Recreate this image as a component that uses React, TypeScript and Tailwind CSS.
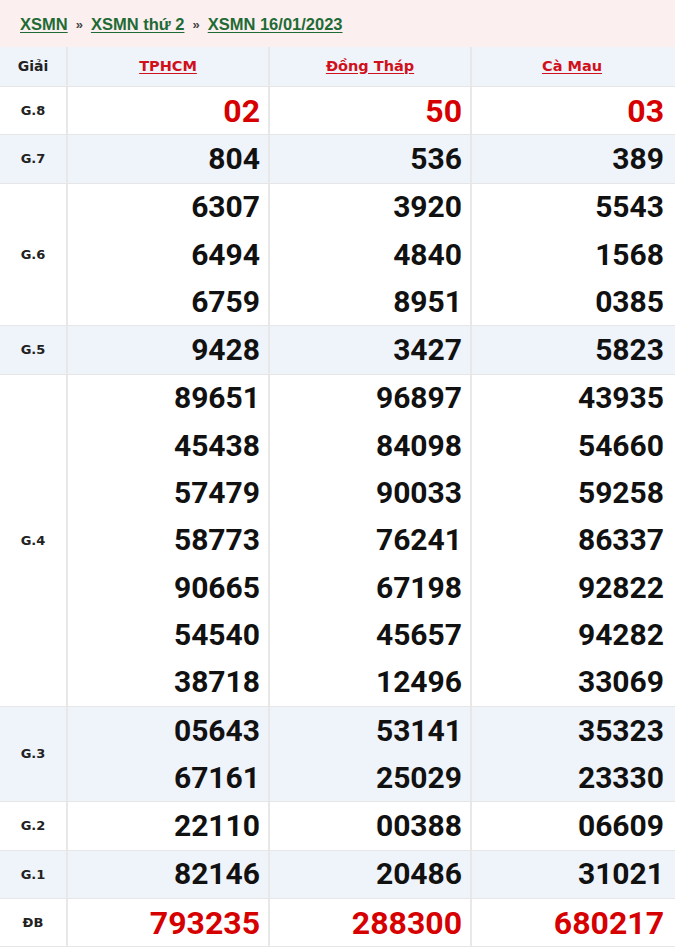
import React from "react";

type Row = { label: string; lines: string[][]; red?: boolean; alt?: boolean };

const rows: Row[] = [
  { label: "G.8", lines: [["02", "50", "03"]], red: true },
  { label: "G.7", lines: [["804", "536", "389"]], alt: true },
  {
    label: "G.6",
    lines: [
      ["6307", "3920", "5543"],
      ["6494", "4840", "1568"],
      ["6759", "8951", "0385"],
    ],
  },
  { label: "G.5", lines: [["9428", "3427", "5823"]], alt: true },
  {
    label: "G.4",
    lines: [
      ["89651", "96897", "43935"],
      ["45438", "84098", "54660"],
      ["57479", "90033", "59258"],
      ["58773", "76241", "86337"],
      ["90665", "67198", "92822"],
      ["54540", "45657", "94282"],
      ["38718", "12496", "33069"],
    ],
  },
  {
    label: "G.3",
    lines: [
      ["05643", "53141", "35323"],
      ["67161", "25029", "23330"],
    ],
    alt: true,
  },
  { label: "G.2", lines: [["22110", "00388", "06609"]] },
  { label: "G.1", lines: [["82146", "20486", "31021"]], alt: true },
  { label: "ĐB", lines: [["793235", "288300", "680217"]], red: true },
];

const labelFont = { fontFamily: "'DejaVu Sans', Verdana, sans-serif" };

export default function App() {
  return (
    <div
      className="w-[675px] h-[947px] overflow-hidden bg-white"
      style={{ fontFamily: "Roboto, 'Liberation Sans', Arial, sans-serif" }}
    >
      <div
        className="h-[47px] bg-[#fcefef] flex items-center pl-[20px] gap-[8px] text-[16.5px] font-bold pt-[2px]"
        style={{ fontFamily: "'Liberation Sans', Arial, sans-serif" }}
      >
        <span className="text-[#1e6b35] underline underline-offset-2">XSMN</span>
        <span className="text-[#444] text-[13px]">»</span>
        <span className="text-[#1e6b35] underline underline-offset-2">XSMN thứ 2</span>
        <span className="text-[#444] text-[13px]">»</span>
        <span className="text-[#1e6b35] underline underline-offset-2">XSMN 16/01/2023</span>
      </div>
      <div
        className="grid grid-cols-[68px_202px_202px_203px] h-[40px] bg-[#eff3fa] border-b border-[#e6e6e6]"
        style={labelFont}
      >
        <div className="flex items-center justify-center text-[14px] font-bold text-[#222] border-r-2 border-[#e8e8e8]">
          Giải
        </div>
        {["TPHCM", "Đồng Tháp", "Cà Mau"].map((n, i) => (
          <div
            key={n}
            className={`flex items-center justify-center ${i < 2 ? "border-r-2 border-[#e8e8e8]" : "pr-[3px]"}`}
          >
            <span className="text-[14.5px] font-bold text-[#d0101a] underline underline-offset-2">{n}</span>
          </div>
        ))}
      </div>
      {rows.map((r) => (
        <div
          key={r.label}
          className={`grid grid-cols-[68px_202px_202px_203px] border-b border-[#e6e6e6] ${
            r.alt ? "bg-[#eff3fa]" : "bg-white"
          }`}
        >
          <div
            className="flex items-center justify-center text-[13px] font-bold text-[#222] border-r-2 border-[#e8e8e8]"
            style={labelFont}
          >
            {r.label}
          </div>
          {[0, 1, 2].map((c) => (
            <div
              key={c}
              className={`flex flex-col ${c < 2 ? "pr-[8px] border-r-2 border-[#e8e8e8]" : "pr-[11px]"}`}
            >
              {r.lines.map((l, i) => (
                <div
                  key={i}
                  className={`h-[47.3px] flex items-center justify-end font-bold leading-none ${
                    r.red ? "text-[32px] text-[#d60000]" : "text-[30px] text-[#111]"
                  }`}
                >
                  {l[c]}
                </div>
              ))}
            </div>
          ))}
        </div>
      ))}
    </div>
  );
}
